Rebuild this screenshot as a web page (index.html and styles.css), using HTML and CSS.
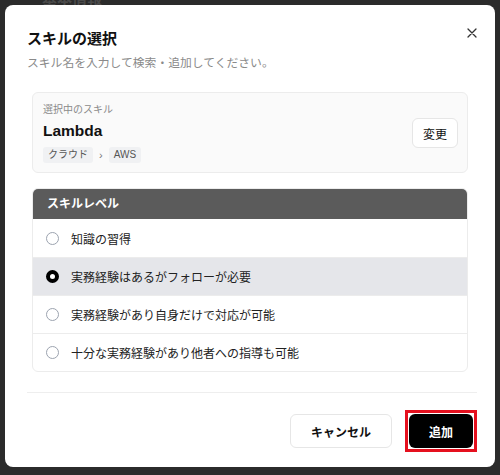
FILE: index.html
```html
<!DOCTYPE html>
<html lang="ja">
<head>
    <meta charset="UTF-8">
    <meta name="viewport" content="width=device-width, initial-scale=1.0">
    <title>スキルの選択</title>
    <link rel="stylesheet" href="styles.css">
</head>
<body>

    <div class="page">
        <h3 class="page-title">基本情報</h3>
    </div>

    <div class="overlay">
        <div class="modal">
            <button class="close" aria-label="閉じる">
                <svg width="10" height="10" viewBox="0 0 10 10">
                    <path d="M1 1L9 9M9 1L1 9" stroke="#333" stroke-width="1.3" stroke-linecap="round"/>
                </svg>
            </button>

            <h2 class="modal-title">スキルの選択</h2>
            <p class="modal-sub">スキル名を入力して検索・追加してください。</p>

            <div class="body">
                <div class="selected">
                    <div class="selected-info">
                        <div class="selected-label">選択中のスキル</div>
                        <div class="selected-name">Lambda</div>
                        <div class="crumbs">
                            <span class="chip">クラウド</span>
                            <span class="sep">›</span>
                            <span class="chip">AWS</span>
                        </div>
                    </div>
                    <button class="btn-change">変更</button>
                </div>

                <div class="levels">
                    <div class="levels-head">スキルレベル</div>
                    <label class="level">
                        <span class="radio"></span>
                        知識の習得
                    </label>
                    <label class="level active">
                        <span class="radio checked"></span>
                        実務経験はあるがフォローが必要
                    </label>
                    <label class="level">
                        <span class="radio"></span>
                        実務経験があり自身だけで対応が可能
                    </label>
                    <label class="level">
                        <span class="radio"></span>
                        十分な実務経験があり他者への指導も可能
                    </label>
                </div>
            </div>

            <div class="footer">
                <button class="btn btn-cancel">キャンセル</button>
                <span class="focus-ring">
                    <button class="btn btn-add">追加</button>
                </span>
            </div>
        </div>
    </div>

</body>
</html>
```

FILE: styles.css
```css
* {
    margin: 0;
    padding: 0;
    box-sizing: border-box;
    font-family: "Liberation Sans", "Noto Sans CJK JP", sans-serif;
}
body {
    background: #2b2b2b;
    height: 475px;
    overflow: hidden;
}
.page {
    padding-left: 42px;
    padding-top: 1px;
}
.page-title {
    font-size: 15px;
    line-height: 1;
    margin-top: -10px;
    color: #4a4a4a;
}
.overlay {
    position: fixed;
    inset: 0;
    padding: 5px;
}
.modal {
    position: relative;
    background: white;
    width: 490px;
    height: 462px;
    border-radius: 8px;
    padding: 24px 22px 20px;
}
.close {
    position: absolute;
    top: 22px;
    right: 17px;
    width: 12px;
    height: 12px;
    border: none;
    background: none;
    display: flex;
    align-items: center;
    justify-content: center;
}
.modal-title {
    font-size: 15px;
    line-height: 20px;
    font-weight: 700;
    color: #111;
}
.modal-sub {
    margin-top: 5px;
    font-size: 11.8px;
    line-height: 18px;
    color: #8a8a8a;
}
.body {
    padding: 20px 5px 0;
}
.selected {
    display: flex;
    align-items: center;
    justify-content: space-between;
    background: #fafafa;
    border: 1px solid #ececec;
    border-radius: 6px;
    padding: 10px 9px 9px 10px;
    height: 81px;
}
.selected-label {
    font-size: 10px;
    line-height: 14px;
    color: #8a8a8a;
}
.selected-name {
    margin-top: 4px;
    font-size: 15.5px;
    line-height: 20px;
    font-weight: 700;
    color: #111;
}
.crumbs {
    margin-top: 6px;
    display: flex;
    align-items: center;
    gap: 4px;
}
.chip {
    background: #f0f1f3;
    color: #555;
    font-size: 10px;
    line-height: 16px;
    padding: 0 5px;
    border-radius: 3px;
}
.sep {
    color: #777;
    font-size: 11px;
    line-height: 16px;
    padding: 0 2px;
}
.btn-change {
    background: white;
    border: 1px solid #e6e6e6;
    border-radius: 6px;
    width: 46px;
    height: 30px;
    font-size: 12px;
    color: #111;
}
.levels {
    margin-top: 15px;
    border: 1px solid #ececec;
    border-radius: 6px;
    overflow: hidden;
}
.levels-head {
    background: #5b5b5b;
    color: white;
    font-size: 12px;
    font-weight: 700;
    height: 30px;
    line-height: 30px;
    padding-left: 14px;
}
.level {
    display: flex;
    align-items: center;
    gap: 12px;
    height: 38px;
    padding-left: 13px;
    font-size: 12px;
    color: #222;
    border-top: 1px solid #ececec;
}
.levels-head + .level {
    border-top: none;
}
.level.active {
    background: #e5e6ea;
}
.radio {
    width: 13px;
    height: 13px;
    border: 1.5px solid #9ca3af;
    border-radius: 50%;
    background: white;
}
.radio.checked {
    border: 4px solid #000;
}
.footer {
    margin-top: 20px;
    border-top: 1px solid #eeeeee;
    padding-top: 17px;
    display: flex;
    justify-content: flex-end;
    align-items: flex-start;
    gap: 13px;
    margin-right: -4px;
}
.btn {
    height: 34px;
    border-radius: 6px;
    font-size: 12px;
    font-weight: 700;
    cursor: pointer;
}
.btn-cancel {
    margin-top: 4px;
    width: 102px;
    background: white;
    border: 1px solid #e6e6e6;
    color: #111;
}
.focus-ring {
    display: block;
    border: 3px solid #e5101e;
    padding: 1px;
}
.btn-add {
    display: block;
    width: 64px;
    background: #000;
    border: none;
    color: white;
}
```
